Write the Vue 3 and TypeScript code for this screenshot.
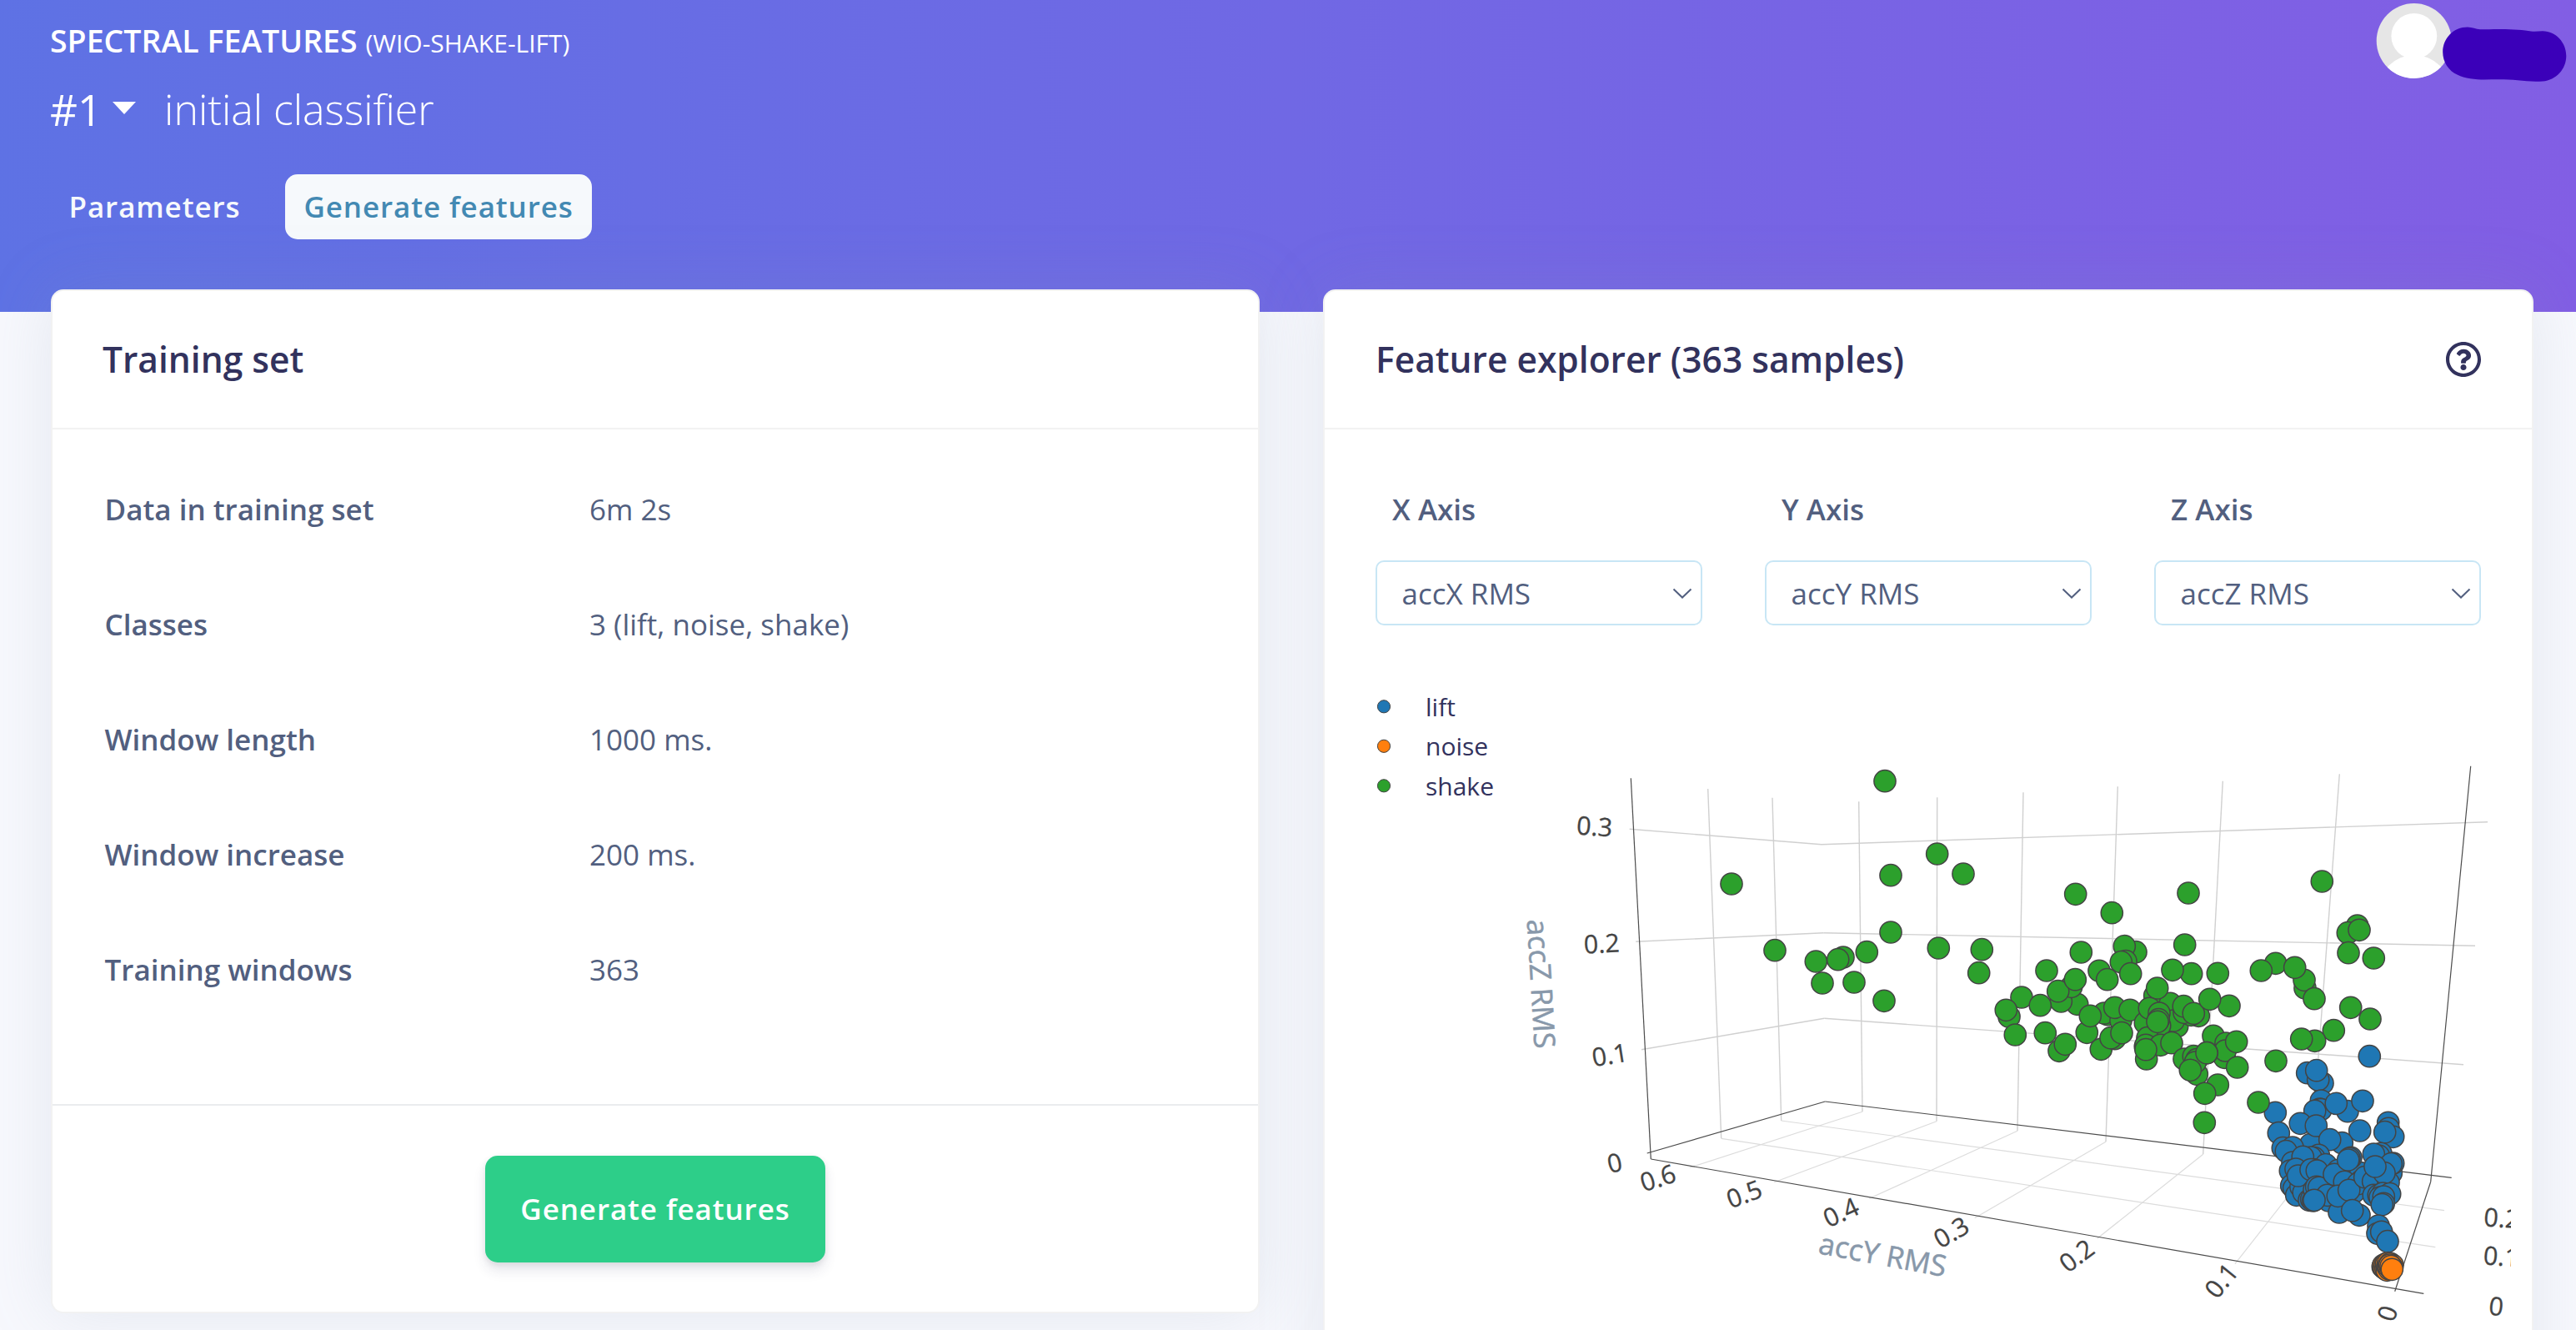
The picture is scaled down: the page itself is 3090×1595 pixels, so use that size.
<script setup lang="ts">
type Pt = [number, number]
type Seg = [number, number, number, number]
interface Tick { x: number; y: number; r: number; t: string }

const rows = [
  { label: 'Data in training set', value: '6m 2s' },
  { label: 'Classes', value: '3 (lift, noise, shake)' },
  { label: 'Window length', value: '1000 ms.' },
  { label: 'Window increase', value: '200 ms.' },
  { label: 'Training windows', value: '363' },
]

const axes = [
  { label: 'X Axis', value: 'accX RMS' },
  { label: 'Y Axis', value: 'accY RMS' },
  { label: 'Z Axis', value: 'accZ RMS' },
]

const legend = [
  { name: 'lift', color: '#1f77b4', y: 847.3, ty: 859 },
  { name: 'noise', color: '#ff7f0e', y: 894.8, ty: 906 },
  { name: 'shake', color: '#2ca02c', y: 942.3, ty: 953.6 },
]

const wallGrid: Seg[] = [
  [2048.7, 946, 2064.7, 1365.3],
  [2126, 956.7, 2136.7, 1344],
  [2229.7, 961.3, 2234, 1333.3],
  [2323.7, 956.3, 2323, 1344.7],
  [2427, 950.3, 2420, 1356.3],
  [2540.3, 943.3, 2526, 1369.3],
  [2666.3, 936.7, 2642.7, 1384.3],
  [2806.3, 928.3, 2771, 1401],
  [1954.7, 994.3, 2185, 1012.7],
  [2185, 1012.7, 2984, 985.7],
  [1962.3, 1129.3, 2187.3, 1118.7],
  [2187.3, 1118.7, 2969, 1134.3],
  [1969, 1258.7, 2188.3, 1221.3],
  [2188.3, 1221.3, 2955, 1276.7],
]

const floorGrid: Seg[] = [
  [2136.7, 1344, 2932, 1451.7],
  [2064.7, 1365.3, 2921.3, 1495.7],
  [2234, 1333.3, 2026.7, 1400.3],
  [2323, 1344.7, 2128.3, 1417.7],
  [2420, 1356.3, 2242.3, 1437.3],
  [2526, 1369.3, 2368.7, 1460.7],
  [2642.7, 1384.3, 2515.7, 1485.3],
  [2771, 1401, 2681, 1515.7],
]

const axisLines: Seg[] = [
  [1956.3, 933.3, 1980.3, 1390],
  [1975.7, 1383, 2189.3, 1321],
  [2189.3, 1321, 2940.7, 1412.3],
  [1980.3, 1390, 2907.3, 1551.3],
  [2963.7, 918.7, 2915.7, 1417.3],
  [2915.7, 1417.3, 2872.7, 1548.7],
]

const ticks: Tick[] = [
  { x: 1912.7, y: 991.3, r: 4, t: '0.3' },
  { x: 1921.3, y: 1131.7, r: -2.5, t: '0.2' },
  { x: 1931, y: 1265.2, r: -9, t: '0.1' },
  { x: 1936.7, y: 1394.7, r: -13, t: '0' },
  { x: 1988.7, y: 1412.7, r: -17.5, t: '0.6' },
  { x: 2092.3, y: 1432, r: -20.5, t: '0.5' },
  { x: 2208.3, y: 1454, r: -24.5, t: '0.4' },
  { x: 2340.7, y: 1478, r: -30, t: '0.3' },
  { x: 2491, y: 1506, r: -37, t: '0.2' },
  { x: 2664.7, y: 1535.7, r: -51, t: '0.1' },
  { x: 2864, y: 1575, r: -72, t: '0' },
  { x: 3001, y: 1461, r: 4, t: '0.2' },
  { x: 3000.3, y: 1507, r: 4, t: '0.1' },
  { x: 2994.3, y: 1566.7, r: 6, t: '0' },
]

/* Samples are stored at three units per pixel, relative to a tile origin, in drawing order. */
const place = (ox: number, oy: number, pts: Pt[]): Pt[] =>
  pts.map(([x, y]) => [+(ox + x / 3).toFixed(1), +(oy + y / 3).toFixed(1)] as Pt)

const shake: Pt[] = [
  ...place(2100, 880, [
    [-69, 540], [483, 170], [671, 432], [504, 509], [765, 504], [1169, 577], [1300, 644], [504, 714],
    [87, 779], [235, 819], [333, 804], [314, 812], [418, 785], [258, 897], [372, 894], [480, 961],
    [676, 771], [832, 776], [821, 860], [1189, 786], [1386, 785], [1345, 764], [1350, 818],
    [1333, 821], [1367, 863], [1254, 853], [1283, 884], [1065, 852], [1175, 973], [1117, 963],
    [1154, 910], [1106, 926], [1168, 884], [975, 948], [1042, 977], [930, 1018], [919, 994],
    [952, 1083], [1060, 1076], [1110, 1141], [1132, 1117], [1285, 1010], [1272, 1005], [1332, 1032],
    [1210, 1075], [1222, 1015], [1310, 985], [1365, 994], [1261, 1135], [1310, 1097], [1296, 1094],
    [1335, 1076],
  ]),
  ...place(2550, 880, [
    [225, 573], [706, 531], [833, 690], [799, 716], [840, 706], [801, 788], [892, 807], [212, 759],
    [236, 863], [168, 850], [331, 862], [539, 826], [487, 852], [645, 915], [642, 886], [608, 841],
    [678, 953], [809, 985], [879, 1026], [748, 1067], [680, 1105], [632, 1098],
    [104, 942], [160, 970], [113, 915], [70, 1040], [85, 988], [185, 1052], [172, 1032], [122, 1050],
    [262, 1015], [235, 1012], [210, 1003], [208, 980], [244, 1006], [372, 979], [302, 955],
    [78, 1094], [120, 1005], [118, 1028], [114, 1036], [74, 1170], [70, 1126], [72, 1120], [125, 1120],
    [72, 1136], [165, 1112], [315, 1087], [355, 1165], [360, 1113], [358, 1140], [398, 1108],
    [210, 1170], [244, 1160], [255, 1172], [292, 1148], [401, 1200], [540, 1177],
  ]),
  ...place(2280, 1250, [
    [1066, 115], [1060, 72], [1042, 100], [1101, 38], [1141, 153], [1094, 184], [1093, 289],
  ]),
]

const lift: Pt[] = place(2650, 1230, [
  [577, 110], [353, 170], [408, 207], [392, 195], [386, 161], [403, 270], [398, 300], [402, 302],
  [380, 307], [498, 308], [457, 280], [552, 271], [238, 313], [250, 386], [328, 352], [365, 427],
  [385, 360], [542, 378], [644, 349], [645, 370], [662, 400], [632, 383], [478, 422], [434, 410],
  [265, 440], [300, 438], [277, 452], [300, 492], [394, 466], [378, 476], [366, 474], [292, 522],
  [345, 515], [330, 500], [296, 575], [305, 585], [314, 610], [330, 580], [350, 560], [430, 540],
  [445, 575], [440, 600], [545, 530], [575, 575], [545, 560], [340, 600], [655, 530], [600, 520],
  [337, 472], [312, 516], [320, 540], [420, 500], [376, 518], [366, 518], [405, 555], [388, 522],
  [360, 628], [368, 625], [378, 590], [386, 580], [395, 583], [430, 630], [425, 610], [374, 630],
  [378, 628], [465, 520], [450, 535], [510, 475], [504, 478], [500, 483], [487, 562], [520, 600],
  [535, 569], [468, 672], [463, 613], [503, 592], [540, 682], [515, 665], [560, 545], [590, 560],
  [618, 460], [610, 468], [592, 462], [662, 495], [655, 497], [645, 565], [630, 530], [597, 507],
  [592, 610], [610, 610], [625, 603], [650, 605], [615, 618], [628, 615], [628, 640], [622, 644],
  [609, 720], [606, 748], [620, 742], [642, 776],
])

const noise: Pt[] = place(2650, 1230, [
  [625, 868], [627, 862], [630, 872], [633, 860], [636, 876], [638, 856], [640, 880], [642, 866],
  [644, 854], [648, 876], [652, 856], [655, 868], [660, 862], [653, 874], [646, 864], [658, 870],
  [650, 861], [654, 866], [658, 877],
])

const groups = [
  { color: '#1f77b4', pts: lift },
  { color: '#2ca02c', pts: [...shake, [2709, 1322] as Pt] },
  { color: '#ff7f0e', pts: noise },
]
</script>

<template>
  <div class="page">
    <header class="hero">
      <div class="hero-text">
        <h1 class="title">SPECTRAL FEATURES <small>(WIO-SHAKE-LIFT)</small></h1>
        <div class="version">
          <span class="version-id">#1</span>
          <i class="caret"></i>
          <span class="version-name">initial classifier</span>
        </div>
        <nav class="tabs">
          <a class="tab">Parameters</a>
          <a class="tab active">Generate features</a>
        </nav>
      </div>
      <svg class="user" width="240" height="110" viewBox="2850 0 240 110">
        <clipPath id="avatar-clip"><circle cx="2895.7" cy="49" r="45" /></clipPath>
        <g clip-path="url(#avatar-clip)">
          <rect x="2850" y="0" width="92" height="96" fill="#e6e6e6" />
          <circle cx="2895.8" cy="43.3" r="27.4" fill="#fff" />
          <circle cx="2896" cy="109" r="43" fill="#fff" />
        </g>
        <path
          fill="#3b00b9"
          d="M2930.2 62.5C2930.2 46 2943 32.6 2960 32.6C2965.5 32.6 2970 35 2975 35.3C2984 35.3 2990 34.8 3000 34.9C3014 35 3028 36 3036 37.4C3041 38 3045 37.3 3050 37.3C3066 37.7 3078.3 51 3078.3 67C3078.3 83 3066 96.3 3050 97.5C3040 98.2 3030 97.5 3020 96.3C3008 95 2994 95.2 2980 95.6C2970 95.6 2956 94 2948 89.8C2937 85 2930.2 74 2930.2 62.5Z"
        />
      </svg>
    </header>

    <main class="columns">
      <section class="card training">
        <div class="card-head"><h2>Training set</h2></div>
        <dl class="facts">
          <div v-for="row in rows" :key="row.label" class="fact">
            <dt>{{ row.label }}</dt>
            <dd>{{ row.value }}</dd>
          </div>
        </dl>
        <div class="card-foot"><button class="go">Generate features</button></div>
      </section>

      <section class="card explorer">
        <div class="card-head">
          <h2>Feature explorer (363 samples)</h2>
          <svg class="help" width="42" height="42" viewBox="8 8 496 496">
            <path
              fill="#32325d"
              d="M256 8C119.043 8 8 119.083 8 256c0 136.997 111.043 248 248 248s248-111.003 248-248C504 119.083 392.957 8 256 8zm0 448c-110.532 0-200-89.431-200-200 0-110.495 89.472-200 200-200 110.491 0 200 89.471 200 200 0 110.53-89.431 200-200 200zm107.244-255.2c0 67.052-72.421 68.084-72.421 92.863V300c0 6.627-5.373 12-12 12h-45.647c-6.627 0-12-5.373-12-12v-8.659c0-35.745 27.1-50.034 47.579-61.516 17.561-9.845 28.324-16.541 28.324-29.579 0-17.246-21.999-28.693-39.784-28.693-23.189 0-33.894 10.977-48.942 29.969-4.057 5.12-11.46 6.071-16.666 2.124l-27.824-21.098c-5.107-3.872-6.251-11.066-2.644-16.363C184.846 131.491 214.94 112 261.794 112c49.071 0 101.45 38.304 101.45 88.8zM298 368c0 23.159-18.841 42-42 42s-42-18.841-42-42 18.841-42 42-42 42 18.841 42 42z"
            />
          </svg>
        </div>
        <div class="selectors">
          <div v-for="axis in axes" :key="axis.label" class="selector">
            <label>{{ axis.label }}</label>
            <div class="select">
              <span>{{ axis.value }}</span>
              <svg width="24" height="14" viewBox="0 0 24 14">
                <path d="M1.5 1.5L12 11.5L22.5 1.5" fill="none" stroke="#525f7f" stroke-width="2" />
              </svg>
            </div>
          </div>
        </div>

        <svg class="plot" width="1362" height="785" viewBox="1650 810 1362 785">
          <g stroke="#444" stroke-width="1">
            <circle v-for="l in legend" :key="l.name" cx="1660" :cy="l.y" r="7.6" :fill="l.color" />
          </g>
          <g class="legend-text">
            <text v-for="l in legend" :key="l.name" x="1710" :y="l.ty">{{ l.name }}</text>
          </g>

          <g stroke="#d0d0d0" stroke-width="1.4">
            <line v-for="(s, i) in wallGrid" :key="i" :x1="s[0]" :y1="s[1]" :x2="s[2]" :y2="s[3]" />
          </g>
          <g stroke="#dcdcdc" stroke-width="1.2">
            <line v-for="(s, i) in floorGrid" :key="i" :x1="s[0]" :y1="s[1]" :x2="s[2]" :y2="s[3]" />
          </g>
          <g stroke="#4c4c4c" stroke-width="1.2">
            <line v-for="(s, i) in axisLines" :key="i" :x1="s[0]" :y1="s[1]" :x2="s[2]" :y2="s[3]" />
          </g>

          <g class="tick-text">
            <text
              v-for="(k, i) in ticks"
              :key="i"
              :transform="`translate(${k.x} ${k.y}) rotate(${k.r})`"
              y="10.8"
            >{{ k.t }}</text>
          </g>
          <g class="axis-title">
            <text transform="translate(1831.5 1103) rotate(86.6)">accZ RMS</text>
            <text transform="translate(2180 1503) rotate(10.5)">accY RMS</text>
          </g>

          <g v-for="g in groups" :key="g.color" :fill="g.color" stroke="#444" stroke-width="1.5">
            <circle v-for="(p, i) in g.pts" :key="i" :cx="p[0]" :cy="p[1]" r="13.1" />
          </g>
        </svg>
      </section>
    </main>
  </div>
</template>

<style>
body {
  margin: 0;
  overflow: hidden;
}
</style>

<style scoped>
.page {
  height: 1595px;
  overflow: hidden;
  background: #f7f8fd;
  color: #525f7f;
  font-family: 'Open Sans', sans-serif;
  font-size: 35px;
}
.hero {
  box-sizing: border-box;
  height: 374px;
  display: flex;
  justify-content: space-between;
  align-items: flex-start;
  padding-left: 60px;
  color: #fff;
  background: linear-gradient(87deg, #5e72e4 0, #825ee4 100%);
}
.hero-text {
  padding-top: 24px;
}
.title {
  margin: 0;
  height: 50px;
  font-size: 37.5px;
  font-weight: 600;
  line-height: 50px;
}
.title small {
  font-size: 30px;
  font-weight: 400;
}
.version {
  display: flex;
  align-items: flex-start;
  height: 68px;
  margin-top: 23px;
  font-size: 50px;
  line-height: 68px;
}
.version-id {
  font-size: 51px;
}
.caret {
  margin: 25px 0 0 13px;
  border: 14.5px solid transparent;
  border-top: 15px solid #fff;
  border-bottom: 0;
}
.version-name {
  margin-left: 34px;
  font-weight: 300;
}
.tabs {
  display: flex;
  gap: 32px;
  margin: 44px 0 0 0.5px;
}
.tab {
  box-sizing: border-box;
  height: 78px;
  padding: 0 22px;
  border-radius: 15px;
  font-weight: 600;
  line-height: 77px;
  letter-spacing: 0.9px;
  color: #f6f9fc;
}
.tab.active {
  background: #f6f9fc;
  color: #4389b3;
}
.columns {
  display: flex;
  gap: 76px;
  align-items: flex-start;
  margin: -27px 51px 0 61px;
}
.card {
  box-sizing: border-box;
  border: 2px solid rgba(0, 0, 0, 0.05);
  border-radius: 15px;
  background: #fff;
  box-shadow: 0 0 80px rgba(136, 152, 170, 0.17);
}
.training {
  width: 1450px;
  height: 1228px;
}
.explorer {
  flex: 1;
  height: 1400px;
}
.card-head {
  box-sizing: border-box;
  height: 166px;
  display: flex;
  align-items: center;
  justify-content: space-between;
  padding: 0 61px 0 61px;
  border-bottom: 2px solid #f2f2f2;
}
.training .card-head {
  padding-left: 60px;
}
.card-head h2 {
  margin: 0;
  font-size: 42.5px;
  font-weight: 600;
  line-height: 64px;
  color: #32325d;
}
.facts {
  margin: 0;
  height: 809px;
  box-sizing: border-box;
  padding: 26.5px 62px 0 62.5px;
}
.fact {
  display: flex;
  height: 138px;
  line-height: 138px;
}
.fact dt {
  width: 581.5px;
  font-weight: 600;
}
.fact dd {
  margin: 0;
}
.card-foot {
  display: flex;
  justify-content: center;
  padding-top: 60px;
  border-top: 2px solid #eaecee;
}
.go {
  width: 408px;
  height: 128px;
  padding: 0;
  border: 0;
  border-radius: 15px;
  background: #2dce89;
  color: #fff;
  font: 600 35px/124px 'Open Sans', sans-serif;
  letter-spacing: 0.9px;
  box-shadow: 0 10px 15px rgba(50, 50, 93, 0.11), 0 2.5px 7.5px rgba(0, 0, 0, 0.08);
}
.selectors {
  display: flex;
  gap: 75px;
  padding: 70px 61px 0 61px;
}
.selector {
  flex: 1;
}
.selector label {
  display: block;
  margin-left: 20px;
  font-weight: 600;
  line-height: 52px;
}
.select {
  box-sizing: border-box;
  height: 78px;
  margin-top: 35px;
  display: flex;
  align-items: center;
  justify-content: space-between;
  padding: 1px 10px 0 29.5px;
  border: 2px solid #c8e6f5;
  border-radius: 10px;
  line-height: 74px;
}
.plot {
  display: block;
  margin: 60px 0 0 61px;
}
.legend-text {
  font-size: 30px;
  fill: #32325d;
}
.tick-text {
  font-size: 30.5px;
  fill: #444;
  stroke: #444;
  stroke-width: 0.3px;
  text-anchor: middle;
}
.axis-title {
  font-size: 35.2px;
  fill: #8898aa;
  stroke: #8898aa;
  stroke-width: 0.5px;
}
</style>
